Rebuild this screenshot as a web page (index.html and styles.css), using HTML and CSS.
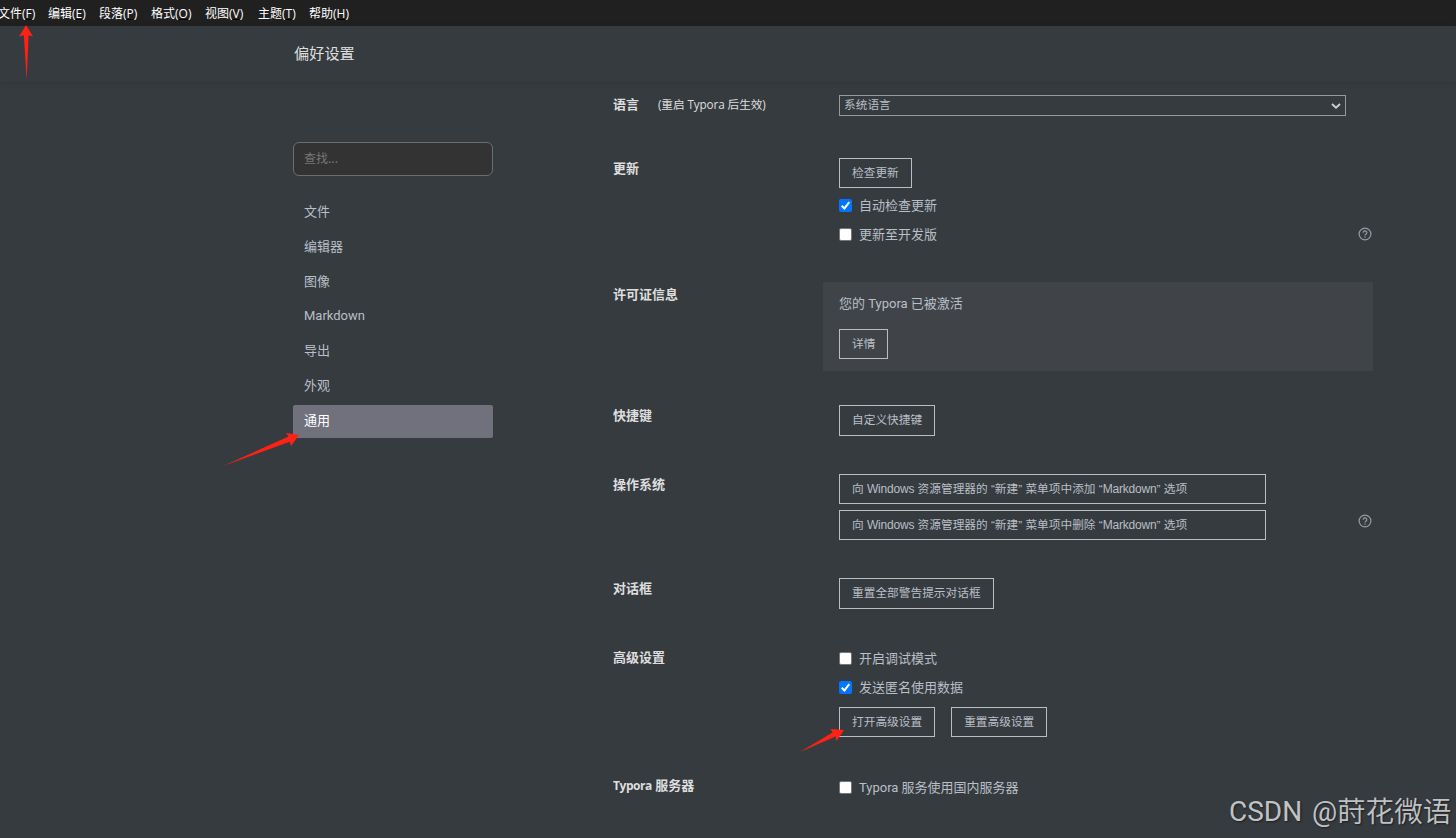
FILE: index.html
```
<!DOCTYPE html>
<html lang="zh-CN">
<head>
<meta charset="utf-8">
<title>偏好设置</title>
<link rel="stylesheet" href="styles.css">
</head>
<body>
<div class="app">
  <nav class="menubar">
    <span class="m-file">文件(<u>F</u>)</span><span class="m-edit">编辑(<u>E</u>)</span><span class="m-para">段落(<u>P</u>)</span><span class="m-format">格式(<u>O</u>)</span><span class="m-view">视图(<u>V</u>)</span><span class="m-theme">主题(<u>T</u>)</span><span>帮助(<u>H</u>)</span>
  </nav>
  <header class="header"><h1 class="title">偏好设置</h1></header>
  <div class="body">
    <aside class="sidebar">
      <input class="search" type="text" placeholder="查找...">
      <ul class="nav">
        <li>文件</li><li>编辑器</li><li>图像</li><li>Markdown</li><li>导出</li><li>外观</li><li class="active">通用</li>
      </ul>
    </aside>
    <main class="settings">
      <section class="row language">
        <div class="label">语言<small class="note">(重启 Typora 后生效)</small></div>
        <div class="content"><div class="select"><span>系统语言</span>
          <svg class="chevron" viewBox="0 0 10 6"><path d="M1 1l4 3.7L9 1"/></svg></div></div>
      </section>
      <section class="row">
        <div class="label">更新</div>
        <div class="content">
          <button class="btn">检查更新</button>
          <label class="check"><i class="box on"><svg viewBox="0 0 13 13"><path d="M2.7 6.8l2.7 2.6 4.9-6.2"/></svg></i>自动检查更新</label>
          <label class="check"><i class="box"></i>更新至开发版</label>
        </div>
        <svg class="help help-update" viewBox="0 0 14 14"><circle cx="7" cy="7" r="5.9"/><path d="M5.2 5.7a1.8 1.8 0 1 1 2.7 1.5Q7 7.7 7 8.6M7 9.6v1.2"/></svg>
      </section>
      <section class="row">
        <div class="label license-label">许可证信息</div>
        <div class="content panel">
          <p class="status">您的 Typora 已被激活</p>
          <button class="btn">详情</button>
        </div>
      </section>
      <section class="row">
        <div class="label">快捷键</div>
        <div class="content"><button class="btn tall">自定义快捷键</button></div>
      </section>
      <section class="row">
        <div class="label">操作系统</div>
        <div class="content stack">
          <button class="btn wide">向 <span class="latin">Windows</span> 资源管理器的 “新建” 菜单项中添加 “<span class="latin">Markdown</span>” 选项</button>
          <button class="btn wide">向 <span class="latin">Windows</span> 资源管理器的 “新建” 菜单项中删除 “<span class="latin">Markdown</span>” 选项</button>
        </div>
        <svg class="help help-system" viewBox="0 0 14 14"><circle cx="7" cy="7" r="5.9"/><path d="M5.2 5.7a1.8 1.8 0 1 1 2.7 1.5Q7 7.7 7 8.6M7 9.6v1.2"/></svg>
      </section>
      <section class="row">
        <div class="label">对话框</div>
        <div class="content"><button class="btn tall">重置全部警告提示对话框</button></div>
      </section>
      <section class="row">
        <div class="label">高级设置</div>
        <div class="content advanced">
          <label class="check"><i class="box"></i>开启调试模式</label>
          <label class="check"><i class="box on"><svg viewBox="0 0 13 13"><path d="M2.7 6.8l2.7 2.6 4.9-6.2"/></svg></i>发送匿名使用数据</label>
          <div class="actions"><button class="btn">打开高级设置</button><button class="btn">重置高级设置</button></div>
        </div>
      </section>
      <section class="row">
        <div class="label server-label"><span class="server-name">Typora</span> 服务器</div>
        <div class="content"><label class="check"><i class="box"></i>Typora 服务使用国内服务器</label></div>
      </section>
    </main>
  </div>
  <svg class="arrows" viewBox="0 0 1456 838">
    <path d="M26 25L33 36.500L28.600 35.200L26.700 80L23.800 35.200L19 36.500Z"/>
    <path d="M299 435L291 446L289.600 441.800L223 466L288.500 436.500L286 433Z"/>
    <path d="M844 730L836.500 741L835.500 736.500L800 752L832.500 732.500L830.500 729Z"/>
  </svg>
  <div class="watermark"><span class="wm-name">CSDN</span><span class="wm-at">@</span><span class="wm-user">莳花微语</span></div>
</div>
</body>
</html>
```
FILE: styles.css
```
* { box-sizing: border-box; }
body { margin: 0; background: #363b40; }
.app {
  position: relative;
  width: 1456px;
  height: 838px;
  overflow: hidden;
  color: #b8bfc6;
  font: 13px/20px Roboto, "Noto Sans CJK SC", sans-serif;
}
.menubar {
  display: flex;
  height: 26px;
  background: #202020;
  color: #fff;
  font: 12px/27px "Open Sans", "Noto Sans CJK SC", sans-serif;
  white-space: nowrap;
}
.menubar u { text-underline-offset: 1px; text-decoration-color: #000; }
.menubar span { width: 51px; flex: none; }
.menubar .m-file { margin-left: -2px; width: 50px; }
.menubar .m-para { width: 52px; }
.menubar .m-format { width: 54px; }
.menubar .m-view { width: 53px; }
.header {
  height: 56px;
  padding: 16px 0 0 294px;
  box-shadow: 0 1px 5px rgba(0, 0, 0, .12);
}
.title { margin: 0; font-size: 15.2px; line-height: 24px; font-weight: 400; color: #dedede; }
.body { display: flex; }
.sidebar { width: 200px; margin-left: 293px; padding-top: 60px; }
.search {
  display: block;
  width: 200px;
  height: 34px;
  padding: 0 10px 3px;
  border: 1px solid #6d6d6d;
  border-radius: 6px;
  background: #333;
  font: 12px "Noto Sans CJK SC", sans-serif;
}
.search::placeholder { color: #777; }
.nav { list-style: none; margin: 20px 0 0; padding: 0; }
.nav li { height: 33px; margin-bottom: 1.83px; padding-left: 11px; line-height: 31px; border-radius: 2px; }
.nav .active { background: #70717d; color: #fff; }
.latin { display: inline-block; font-size: 12px; letter-spacing: -.18px; }
.settings {
  display: grid;
  grid-template-rows: 63px 124px 123px 69px 104px 66px 129px 60px;
  width: 780px;
  margin: 13px 0 0 120px;
  height: 743px;
}
.row { display: grid; grid-template-columns: 226px 507px 1fr; align-items: start; }
.label { font-weight: 700; color: #dedede; white-space: nowrap; font-family: "Open Sans", "Noto Sans CJK SC", sans-serif; }
.language .label { line-height: 18px; }
.license-label { padding-top: 2px; }
.advanced-label { padding-top: 3px; }
.server-label { padding-top: 2px; }
.server-name { display: inline-block; font-size: 12px; letter-spacing: -.45px; }
.note { margin-left: 19px; font-size: 11.7px; font-weight: 400; letter-spacing: -.1px; }
.content { display: flex; flex-direction: column; align-items: flex-start; }
.select {
  display: flex;
  align-items: center;
  justify-content: space-between;
  width: 507px;
  height: 21px;
  padding: 0 4px;
  border: 1px solid #999;
  font-size: 11.7px;
  line-height: 16px;
}
.select span { padding-bottom: 2px; }
.chevron { width: 10px; height: 6px; fill: none; stroke: #c8cdd2; stroke-width: 2; }
.btn {
  height: 30px;
  padding: 0 12px 1px;
  border: 1px solid #b8bfc0;
  background: transparent;
  color: #b8bfc6;
  font: 11.7px/27px "Liberation Sans", "Noto Sans CJK SC", sans-serif;
  white-space: nowrap;
}
.tall { height: 31px; padding-bottom: 3px; }
.wide { width: 427px; text-align: left; }
.stack { gap: 6px; }
.check { display: flex; align-items: center; gap: 7px; height: 29px; white-space: nowrap; }
.btn + .check { margin-top: 3px; }
.box { display: block; width: 13px; height: 13px; background: #fff; border: 1px solid #767676; border-radius: 2px; }
.box.on { background: #0075ff; border: 0; }
.box svg { display: block; width: 13px; height: 13px; fill: none; stroke: #fff; stroke-width: 2; }
.panel { width: 550px; height: 89px; margin-left: -16px; padding: 12px 16px; background: #404448; }
.status { margin: 0 0 15px; }
.help { width: 14px; height: 14px; margin-left: 12px; fill: none; stroke: #979ca1; stroke-width: 1.2; }
.help-update { margin-top: 69px; }
.help-system { margin-top: 40px; }
.row:nth-child(7) .label { padding-top: 3px; }
.actions { display: flex; gap: 16px; margin-top: 5px; }
.arrows { position: absolute; inset: 0; width: 1456px; height: 838px; fill: #ff2115; pointer-events: none; }
.watermark {
  position: absolute;
  left: 1229px;
  top: 792px;
  display: flex;
  font: 28px/40px Roboto, "Noto Sans CJK SC", sans-serif;
  color: #c0c2c4;
  text-shadow: 1px 1px 2px rgba(0, 0, 0, .5);
  white-space: nowrap;
}
.wm-name { width: 83px; }
.wm-at { width: 25px; }
.wm-user { font-size: 28.6px; font-weight: 350; }
```
